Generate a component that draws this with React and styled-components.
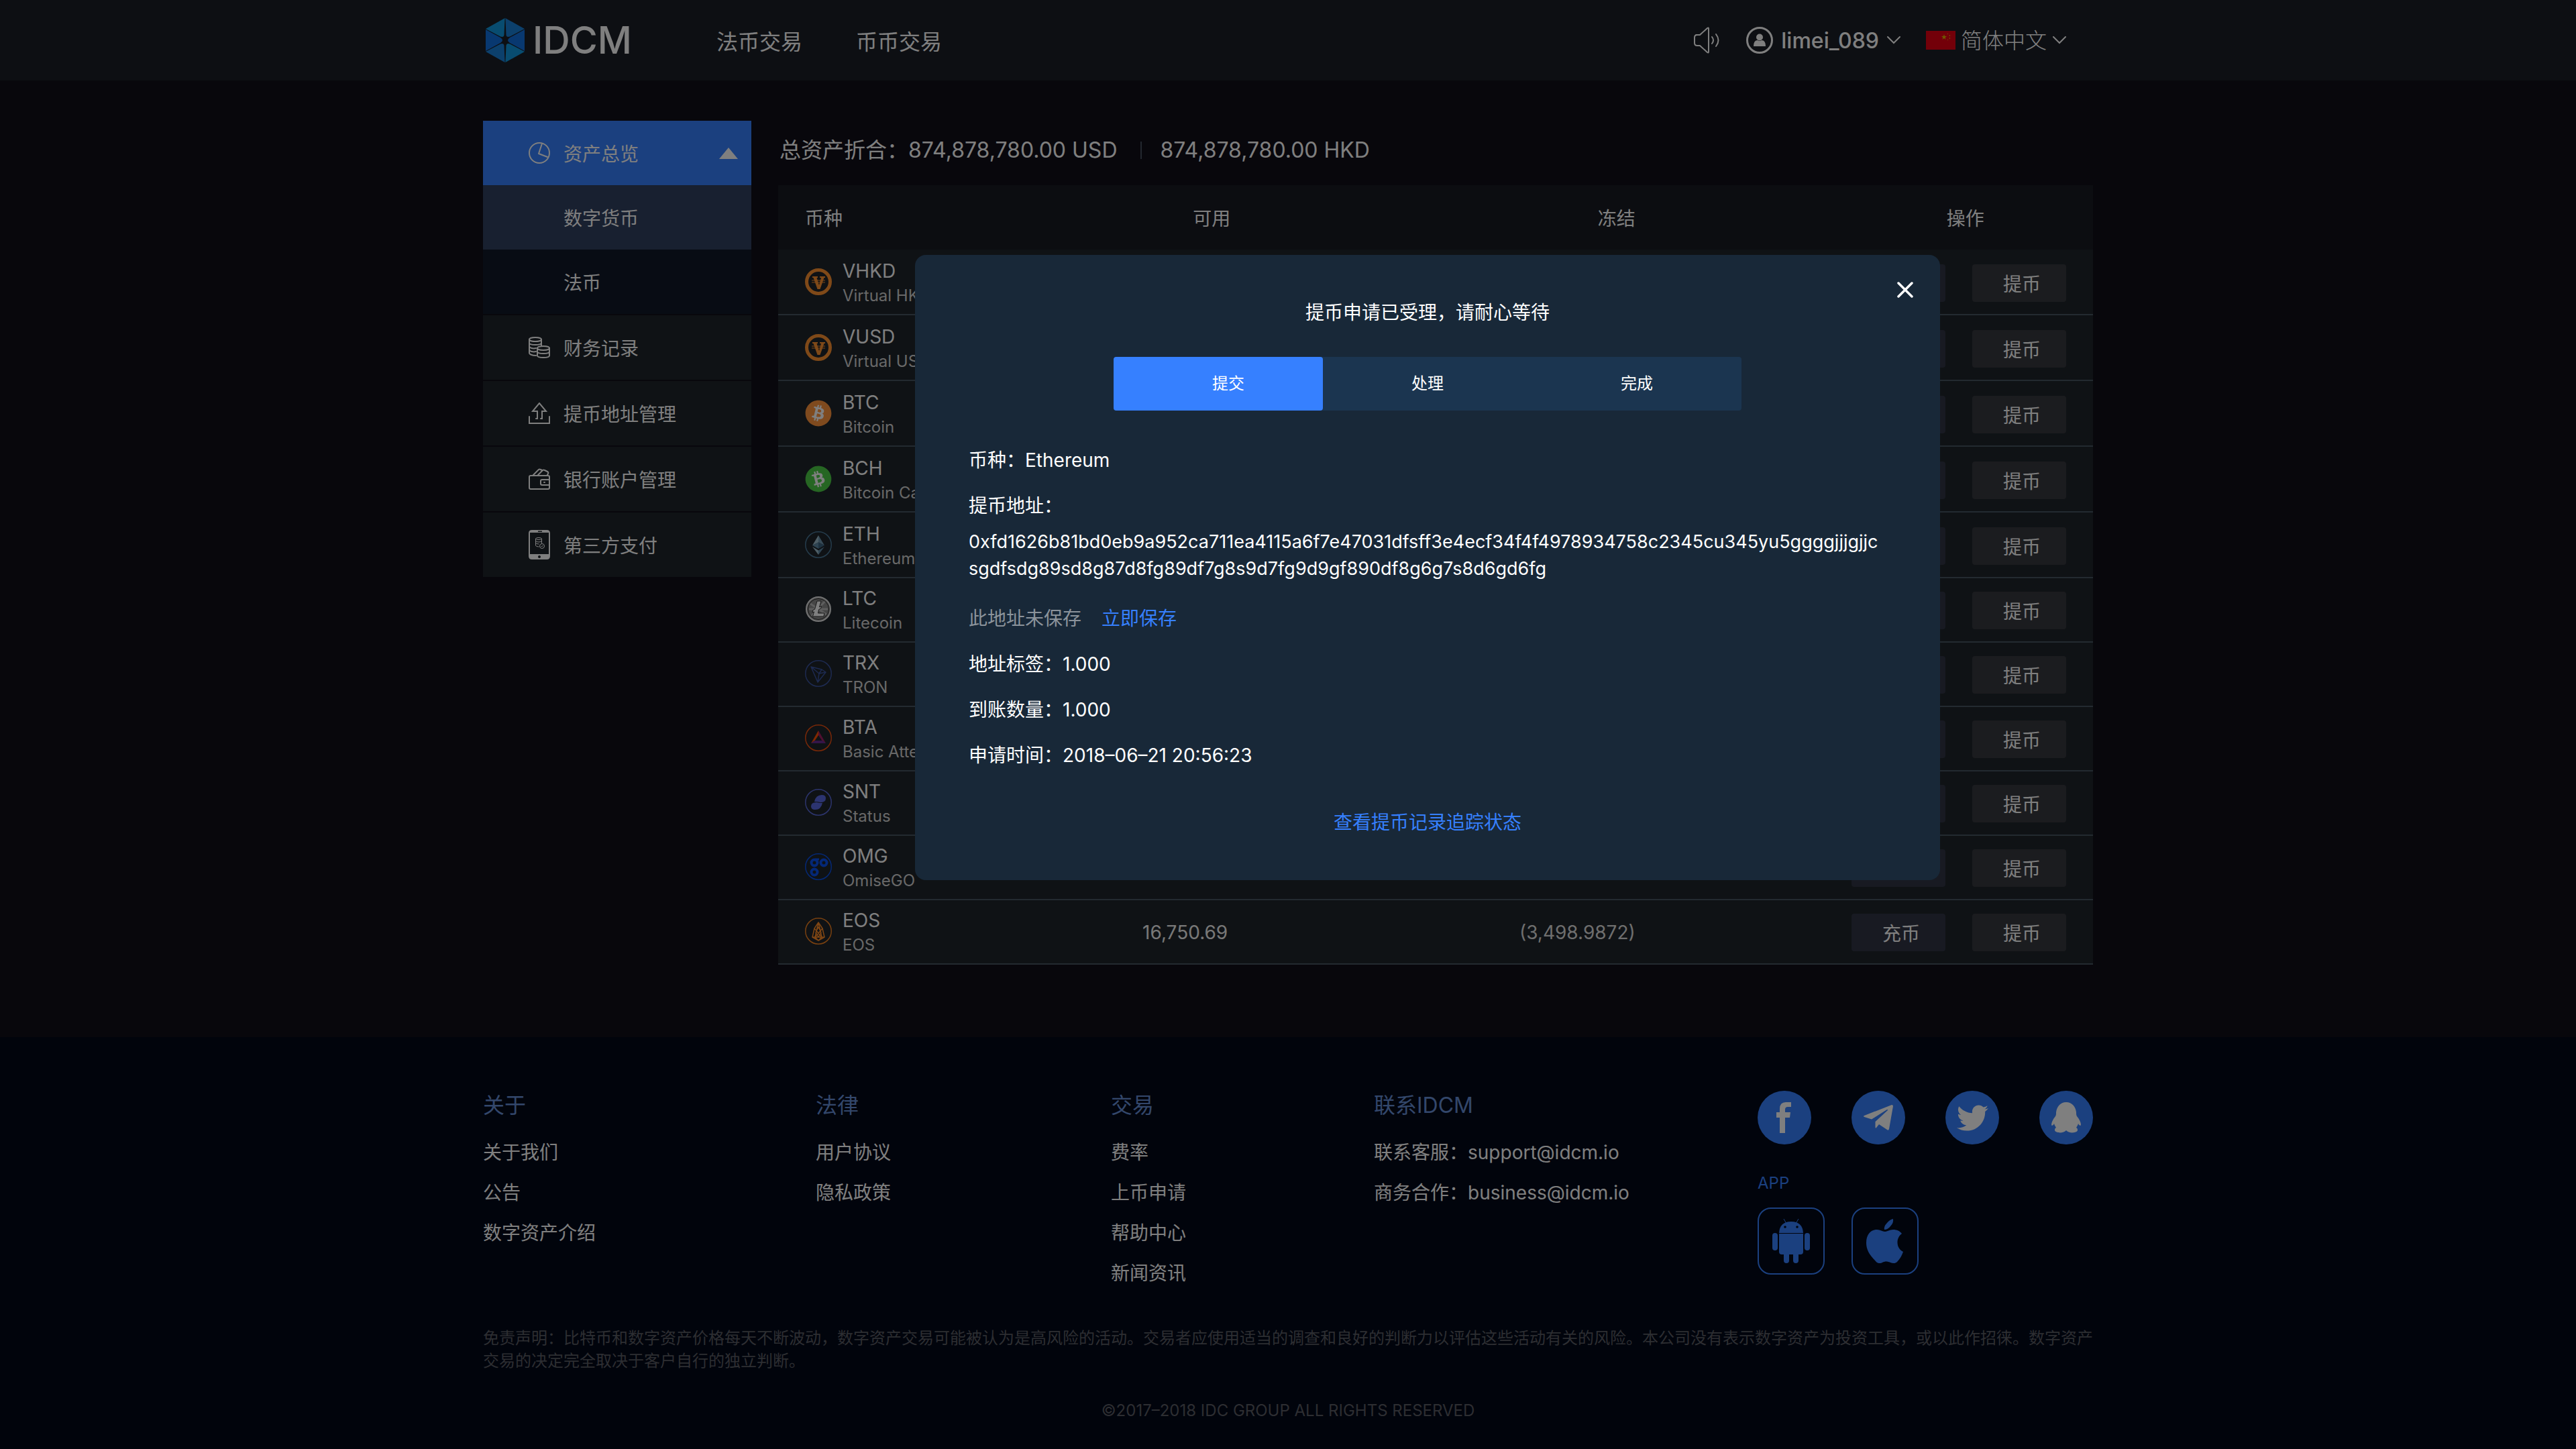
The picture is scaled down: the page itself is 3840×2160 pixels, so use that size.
import React from "react";
import styled, { createGlobalStyle } from "styled-components";
import { FaTwitter, FaBitcoin } from "react-icons/fa";

const GlobalStyle = createGlobalStyle`
  * { box-sizing: border-box; }
  body {
    margin: 0;
    background: #100e18;
    color: #fff;
    font-family: Inter, "Noto Sans CJK SC", sans-serif;
    font-size: 28px;
  }
  button, select { font: inherit; color: inherit; background: none; border: 0; padding: 0; margin: 0; cursor: pointer; }
  a { color: inherit; text-decoration: none; }
  h1, h2, p, ul, dl, dd, ol { margin: 0; padding: 0; font-weight: 400; list-style: none; }
  svg { display: block; flex: none; }
`;

/* ---------- layout ---------- */

const Page = styled.div`
  position: relative;
  min-height: 100vh;
`;

const Container = styled.div`
  max-width: 2400px;
  margin: 0 auto;
`;

const TopBar = styled.header`
  background: #1a1e26;
`;

const TopBarInner = styled(Container)`
  display: flex;
  align-items: center;
  height: 120px;
  padding: 0 40px 0 4px;
`;

const Brand = styled.a`
  display: flex;
  align-items: center;
  gap: 12px;
  width: 344px;
  font-size: 56px;
  font-weight: 500;
  line-height: 60px;
`;

const MainNav = styled.nav`
  display: flex;
  gap: 80px;
  font-size: 32px;
`;

const Account = styled.div`
  display: flex;
  align-items: center;
  gap: 38px;
  margin-left: auto;
  font-size: 32px;
`;

const IconButton = styled.button`
  display: flex;
`;

const UserButton = styled.button`
  display: flex;
  align-items: center;
  gap: 12px;
  font-weight: 500;
`;

const LanguageField = styled.label`
  display: flex;
  align-items: center;
  gap: 8px;
`;

const LanguageSelect = styled.select`
  appearance: none;
  font-weight: 300;
  option { color: #000; }
`;

const Body = styled(Container)`
  display: flex;
  align-items: flex-start;
  gap: 40px;
  padding: 60px 0 108px;
`;

/* ---------- sidebar ---------- */

const Sidebar = styled.nav`
  display: flex;
  flex-direction: column;
  gap: 2px;
  width: 400px;
  flex: none;
`;

const Group = styled.div`
  display: flex;
  flex-direction: column;
`;

const tones = { parent: "#3680ff", current: "#304060", child: "#101828", item: "#1e242a" };

const SideItem = styled.a`
  display: flex;
  align-items: center;
  gap: 20px;
  height: 96px;
  padding: 0 20px 0 ${(p) => (p.$indent ? 120 : 68)}px;
  background: ${(p) => tones[p.$tone]};
`;

const Caret = styled.span`
  margin-left: auto;
  border: 14px solid transparent;
  border-top: 0;
  border-bottom: 17px solid #fff;
`;

/* ---------- assets ---------- */

const Content = styled.main`
  flex: 1;
  min-width: 0;
`;

const Summary = styled.div`
  display: flex;
  align-items: center;
  padding: 2px 0 10px 2px;
  font-size: 32px;
  line-height: 84px;
`;

const Divider = styled.span`
  width: 2px;
  height: 26px;
  margin: 0 28px 0 34px;
  background: #465060;
`;

const AssetTable = styled.table`
  width: 100%;
  table-layout: fixed;
  border-collapse: separate;
  border-spacing: 0;
`;

const Col = styled.col`
  width: ${(p) => p.$w}%;
`;

const aligns = { left: "0 0 0 40px", first: "0", second: "0 302px 0 0", center: "0" };

const HeadCell = styled.th`
  height: 96px;
  padding: ${(p) => aligns[p.$kind]};
  background: #181a22;
  font-weight: 400;
  text-align: ${(p) => (p.$kind === "left" ? "left" : p.$kind === "center" ? "center" : "right")};
`;

const Cell = styled.td`
  height: ${(p) => (p.$tall ? 98 : 96)}px;
  padding: ${(p) => (p.$tall ? 4 : 2)}px 0 0;
  border-bottom: 2px solid #465460;
  background: #1e242a;
`;

const AmountCell = styled(Cell)`
  padding-right: ${(p) => (p.$muted ? 302 : 4)}px;
  text-align: right;
  color: ${(p) => (p.$muted ? "#dcdcdc" : "#f0f0f0")};
`;

const Coin = styled.div`
  display: flex;
  align-items: center;
  gap: 16px;
  padding-left: 40px;
  > svg { margin-bottom: 4px; }
`;

const CoinName = styled.div`
  line-height: 38px;
`;

const CoinNote = styled.div`
  font-size: 24px;
  line-height: 36px;
  color: #d0d0d0;
`;

const Actions = styled.div`
  display: flex;
  justify-content: flex-end;
  gap: 40px;
  padding-right: 40px;
`;

const ActionButton = styled.button`
  width: 140px;
  height: 56px;
  padding-left: 8px;
  border-radius: 4px;
  background: ${(p) => (p.$cool ? "#303444" : "#36383f")};
`;

/* ---------- footer ---------- */

const Footer = styled.footer`
  padding: 80px 0 40px;
  background: #020818;
`;

const FooterGrid = styled.div`
  display: grid;
  grid-template-columns: 496fr 440fr 392fr 572fr 500fr;
`;

const FooterHeading = styled.h2`
  margin-bottom: 18px;
  font-size: 32px;
  line-height: 44px;
  color: #668ed6;
`;

const FooterList = styled.ul`
  line-height: 60px;
`;

const Socials = styled.div`
  display: flex;
  justify-content: space-between;
`;

const SocialLink = styled.a`
  display: grid;
  place-items: center;
  width: 80px;
  height: 80px;
  border-radius: 50%;
  background: #3680ff;
`;

const AppLabel = styled.p`
  margin: 40px 0 18px;
  font-size: 24px;
  line-height: 36px;
  color: #3680ff;
`;

const Apps = styled.div`
  display: flex;
  gap: 40px;
`;

const AppLink = styled.a`
  display: grid;
  place-items: center;
  width: 100px;
  height: 100px;
  border: 2px solid #3680ff;
  border-radius: 20px;
  color: #3680ff;
`;

const Legal = styled.p`
  margin-top: ${(p) => p.$top}px;
  font-size: 24px;
  line-height: 34px;
  color: #5a5c64;
  text-align: ${(p) => (p.$center ? "center" : "left")};
`;

/* ---------- dialog ---------- */

const Scrim = styled.div`
  position: absolute;
  inset: 0;
  background: rgba(0, 0, 0, 0.5);
`;

const Dialog = styled.section`
  position: absolute;
  top: 380px;
  left: calc(50% - 556px);
  width: 1528px;
  padding: 66px 80px;
  border-radius: 16px;
  background: #182838;
  line-height: 40px;
`;

const CloseButton = styled.button`
  position: absolute;
  top: 40px;
  right: 40px;
`;

const DialogTitle = styled.h1`
  font-size: 28px;
  text-align: center;
`;

const Steps = styled.ol`
  display: grid;
  grid-template-columns: repeat(3, minmax(0, 1fr));
  width: 936px;
  margin: 46px auto 54px;
  border-radius: 4px;
  background: #1b3550;
  font-size: 24px;
`;

const Step = styled.li`
  padding-left: ${(p) => (p.$active ? 30 : 0)}px;
  border-radius: 4px;
  background: ${(p) => (p.$active ? "#3680ff" : "transparent")};
  line-height: 80px;
  text-align: center;
`;

const Fields = styled.dl`
  display: flex;
  flex-direction: column;
  gap: 28px;
`;

const Field = styled.div`
  display: flex;
  flex-wrap: wrap;
`;

const Address = styled.dd`
  width: 100%;
  margin-top: 14px;
  font-size: 27px;
  white-space: pre-line;
`;

const SaveRow = styled.div`
  display: flex;
  gap: 30px;
  padding-top: 6px;
  color: #8b939b;
`;

const LinkButton = styled.button`
  color: #3680ff;
`;

const TrackRow = styled.p`
  margin-top: 60px;
  text-align: center;
  color: #3680ff;
`;

/* ---------- icons ---------- */

const Logo = () => (
  <svg width="58" height="66" viewBox="0 0 58 66">
    <path d="M28.600 0 0 16 22 27.500Q27 29 27.500 25z" fill="#1098e0" />
    <path d="M29.400 0 58 16 36 27.500Q31 29 30.500 25z" fill="#1880d8" />
    <path d="M0 17V49L22 37Q25 35 25 33T22 29z" fill="#1070e0" />
    <path d="M58 17V49L36 37Q33 35 33 33T36 29z" fill="#1070e0" />
    <path d="M28.600 66 0 50 22 38.500Q27 37 27.500 41z" fill="#1880d8" />
    <path d="M29.400 66 58 50 36 38.500Q31 37 30.500 41z" fill="#1098e0" />
  </svg>
);

const Speaker = () => (
  <svg width="40" height="40" viewBox="0 0 40 40" fill="none" stroke="#fff" strokeWidth="2" strokeLinecap="round" strokeLinejoin="round">
    <path d="M3 12h6L20 2q2-1.500 2 1v34q0 2.500-2 1L9 28H5q-4 0-4-4V16q0-4 4-4z" />
    <path d="M27 15q4 5 0 10M33 11q7 9 0 18" />
  </svg>
);

const Avatar = () => (
  <svg width="40" height="40" viewBox="0 0 40 40">
    <circle cx="20" cy="20" r="18.500" fill="none" stroke="#fff" strokeWidth="3" />
    <circle cx="20" cy="15.500" r="5" fill="#fff" />
    <path d="M11 29q0-9 6-9 3 2 6 0 6 0 6 9z" fill="#fff" />
  </svg>
);

const Chevron = () => (
  <svg width="20" height="12" viewBox="0 0 20 12" fill="none" stroke="#fff" strokeWidth="2" strokeLinecap="round">
    <path d="M1 1l9 9 9-9" />
  </svg>
);

const Flag = () => (
  <svg width="44" height="28" viewBox="0 0 44 28">
    <path d="M0 0h44v28H0z" fill="#e60012" />
    <path d="M27 5l1 3h3l-2.400 2 1 3-2.600-2-2.600 2 1-3-2.400-2h3zM32 4h1v1h-1zM35 6h1v2h-1zM35 10h1v2h-1zM32 13h1v1h-1z" fill="#e0b000" />
  </svg>
);

const Close = () => (
  <svg width="24" height="24" viewBox="0 0 24 24" stroke="#fff" strokeWidth="3.500" strokeLinecap="round">
    <path d="M2 2l20 20M22 2L2 22" />
  </svg>
);

const line = { fill: "none", stroke: "#fff", strokeWidth: 2, strokeLinejoin: "round", strokeLinecap: "round" };

const PieIcon = () => (
  <svg width="32" height="32" viewBox="0 0 32 32" {...line}>
    <circle cx="16" cy="16" r="15" />
    <path d="M20 2l-5 15 13 5" />
  </svg>
);

const CoinsIcon = () => (
  <svg width="32" height="32" viewBox="0 0 32 32" {...line}>
    <ellipse cx="10" cy="4" rx="9" ry="3" />
    <path d="M1 4v20c0 2 4 4 10 4M19 4v9M1 9c0 4 18 4 18 0M1 14c0 3 6 4 10 3M1 19c0 3 6 4 10 3" />
    <ellipse cx="22" cy="17" rx="9" ry="3" />
    <path d="M13 17v11c0 4 18 4 18 0V17M13 22c0 4 18 4 18 0" />
  </svg>
);

const UploadIcon = () => (
  <svg width="32" height="32" viewBox="0 0 32 32" {...line} strokeLinejoin="miter">
    <path d="M1 21v10h30V21M11 24h2V13H6L16 1l10 12h-6v11h-2" />
  </svg>
);

const WalletIcon = () => (
  <svg width="32" height="32" viewBox="0 0 32 32" {...line}>
    <path d="M3 11h26q2 0 2 2v16q0 2-2 2H3q-2 0-2-2V13q0-2 2-2zM31 17H20q-2 0-2 2v4q0 2 2 2h11M23 21h1M7 10l8-8q1-1 3 0l2 1M14 10l7-7q1-1 3 0l4 2q2 1 1 3l-1 2" />
  </svg>
);

const PhoneIcon = () => (
  <svg width="32" height="44" viewBox="0 0 32 44">
    <path fillRule="evenodd" fill="#fff" d="M5 0h22q5 0 5 5v34q0 5-5 5H5q-5 0-5-5V5q0-5 5-5zM2 4v32h28V4zM14 1.500v1.500h6V1.500zM16 38a2 2 0 1 0 .01 0z" />
    <g fill="none" stroke="#fff" strokeWidth="1">
      <ellipse cx="15" cy="13" rx="4.500" ry="1.500" />
      <path d="M10.500 13v10q0 2 5 2M19.500 13v7M10.500 16q0 2 4.500 2t4.500-2M10.500 19q0 2 5 2" />
      <circle cx="20" cy="24" r="3.500" />
      <path d="M18.500 24l1 1 2-2" />
    </g>
  </svg>
);

const Disc = ({ children, ring, width = 1.5 }) => (
  <svg width="40" height="40" viewBox="0 0 40 40">
    {ring && <circle cx="20" cy="20" r={20 - width / 2} fill="none" stroke={ring} strokeWidth={width} />}
    {children}
  </svg>
);

const VCoin = () => (
  <Disc ring="#ff9230" width={5}>
    <path d="M11 12h8v2h-1.500l3.500 11 3-11H22v-2h8v2h-1.500L22.500 31h-4L12.500 14H11z" fill="#ff9230" />
    <path d="M10 18h20M10 21h20" stroke="#ff9230" strokeWidth="1" />
  </Disc>
);

const BitBadge = styled.span`
  display: flex;
  flex: none;
  width: 40px;
  height: 40px;
  margin-bottom: 4px;
  border-radius: 50%;
  background: radial-gradient(circle, #fff 60%, transparent 61%);
  color: ${(p) => p.$color};
  svg { transform: rotate(${(p) => p.$turn}deg); }
`;

const Ltc = () => (
  <Disc>
    <circle cx="20" cy="20" r="18" fill="#8c8c8c" stroke="#e4e4e4" strokeWidth="2" />
    <path d="M8 12l24 16M6 20h28M10 30l20-22" stroke="#bcbcbc" strokeWidth="3" />
    <circle cx="20" cy="20" r="15.500" fill="none" stroke="#333" strokeWidth="1" />
    <path d="M18 8h6l-2.500 9 3-1.500-.8 3.500-3 1.500L19.500 26H29l-1.200 5H11.500l2-7-2.500 1 .8-3.500 2.700-1.200z" fill="#fff" stroke="#333" strokeWidth="1" />
  </Disc>
);

const Eth = () => (
  <Disc ring="#4a7898">
    <path d="M20 6l-9 15 9-4.500z" fill="#9cbccc" />
    <path d="M20 6l9 15-9-4.500z" fill="#6c94ac" />
    <path d="M11 21l9-4.500V26z" fill="#5c88a4" />
    <path d="M29 21l-9-4.500V26z" fill="#3c6480" />
    <path d="M11 23l9 5.500V35z" fill="#9cbccc" />
    <path d="M29 23l-9 5.500V35z" fill="#5c88a4" />
  </Disc>
);

const Trx = () => (
  <Disc ring="#3a54a0">
    <path d="M9 10l16 4 6 4-12 15zM9 10l12 10 4-6M21 20l-2 13M21 20l10-2" fill="none" stroke="#3a54a0" strokeWidth="1.500" strokeLinejoin="round" />
  </Disc>
);

const Bta = () => (
  <Disc ring="#f05010">
    <path d="M20 9v7l-6 9-5 3z" fill="#ff5000" />
    <path d="M20 9v7l6 9 5 3z" fill="#9e1f63" />
    <path d="M9 28l5-4h12l5 4z" fill="#662d91" />
  </Disc>
);

const Snt = () => (
  <Disc ring="#5868d8">
    <path d="M14 19q2-10 11-10 6 0 6 5 0 6-8 6-4-1-9-1z" fill="#5868e0" />
    <path d="M26 21q-2 10-11 10-6 0-6-5 0-6 8-6 4 1 9 1z" fill="#5868e0" />
  </Disc>
);

const Omg = () => (
  <Disc ring="#0850e8">
    <g fill="none" stroke="#0850f0" strokeWidth="4">
      <circle cx="14" cy="14" r="4.500" />
      <circle cx="28" cy="14" r="4.500" />
      <circle cx="14" cy="28" r="4.500" />
    </g>
    <path d="M15 7.500h6v3h-4z" fill="#0850f0" />
  </Disc>
);

const Eos = () => (
  <Disc ring="#f08020">
    <path d="M20 7l6 9 3 13-9 5-9-5 3-13zM20 7l-5 22 5 5 5-5zM14 16l11 13M26 16L15 29M11 29h18M20 14l-4 8 4 7 4-7z" fill="none" stroke="#ff8c28" strokeWidth="1.500" strokeLinejoin="round" />
  </Disc>
);

const Facebook = () => (
  <svg width="24" height="46" viewBox="0 0 24 46">
    <path d="M22 0v7h-5q-4 0-4 4v4h8l-1 8h-7v23H5V23H0v-8h5v-5Q5 0 14 0z" fill="#fff" />
  </svg>
);

const Telegram = () => (
  <svg width="44" height="38" viewBox="0 0 44 38">
    <path d="M42 0q2 0 2 2l-6 34q-1 3-3 1l-12-8-4 5q-1.500 1.500-1.500-1v-8L36 8q1-1-1-1L12 21.500 1 18q-2-1 0-2z" fill="#fff" />
  </svg>
);

const Penguin = () => (
  <svg width="44" height="46" viewBox="0 0 44 46">
    <path d="M22 0c9 0 14 7 15 15 0 3 0 4 1 6 4 5 6 9 6 13-1 2-3 0-4-2-1 3-2 4-3 6 2 1 2 2 2 4-1 4-13 5-17 0-4 5-16 4-17 0 0-2 0-3 2-4-1-2-2-3-3-6-1 2-3 4-4 2 0-4 2-8 6-13 1-2 1-3 1-6C8 7 13 0 22 0z" fill="#fff" />
  </svg>
);

const Android = () => (
  <svg width="56" height="66" viewBox="0 0 56 66" fill="currentColor">
    <path d="M10 21Q11 4 28 4t18 17z" />
    <path d="M17 0l4 7M39 0l-4 7" stroke="currentColor" strokeWidth="1" />
    <circle cx="19" cy="12" r="1.800" fill="#020818" />
    <circle cx="37" cy="12" r="1.800" fill="#020818" />
    <path d="M10 22h36v27q0 4-4 4h-3v9a4 4 0 0 1-8 0v-9h-6v9a4 4 0 0 1-8 0v-9h-3q-4 0-4-4z" />
    <rect x="0" y="21" width="8" height="26" rx="4" />
    <rect x="48" y="21" width="8" height="26" rx="4" />
  </svg>
);

const Apple = () => (
  <svg width="56" height="66" viewBox="0 0 56 66" fill="currentColor">
    <path d="M40 0q1 6-4 11-4 5-9 5-1-5 4-10 4-5 9-6z" />
    <path d="M53 22c-9 6-9 22 2 27-2 6-5 11-9 15-3 3-7 2-10 1-5-2-8-2-12 0-4 2-8 1-10-2C4 53 0 45 0 36c0-13 7-20 16-20 5 0 8 3 12 3 3 0 7-3 12-3 6 0 10 2 13 6z" />
  </svg>
);

/* ---------- data ---------- */

const coins = [
  { code: "VHKD", name: "Virtual HKD", icon: <VCoin />, tall: true },
  { code: "VUSD", name: "Virtual USD", icon: <VCoin />, tall: true },
  { code: "BTC", name: "Bitcoin", icon: <BitBadge $color="#ff943c" $turn={0}><FaBitcoin size={40} /></BitBadge>, tall: true },
  { code: "BCH", name: "Bitcoin Cash", icon: <BitBadge $color="#4ccc47" $turn={-28}><FaBitcoin size={40} /></BitBadge>, tall: true },
  { code: "ETH", name: "Ethereum", icon: <Eth />, tall: true },
  { code: "LTC", name: "Litecoin", icon: <Ltc /> },
  { code: "TRX", name: "TRON", icon: <Trx /> },
  { code: "BTA", name: "Basic Attention", icon: <Bta /> },
  { code: "SNT", name: "Status", icon: <Snt /> },
  { code: "OMG", name: "OmiseGO", icon: <Omg /> },
  { code: "EOS", name: "EOS", icon: <Eos />, free: "16,750.69", frozen: "(3,498.9872)" },
];

const footerColumns = [
  { title: "关于", links: ["关于我们", "公告", "数字资产介绍"] },
  { title: "法律", links: ["用户协议", "隐私政策"] },
  { title: "交易", links: ["费率", "上币申请", "帮助中心", "新闻资讯"] },
  { title: "联系IDCM", links: ["联系客服：support@idcm.io", "商务合作：business@idcm.io"] },
];

const address =
  "0xfd1626b81bd0eb9a952ca711ea4115a6f7e47031dfsff3e4ecf34f4f4978934758c2345cu345yu5ggggjjjgjjc\nsgdfsdg89sd8g87d8fg89df7g8s9d7fg9d9gf890df8g6g7s8d6gd6fg";

export default function App() {
  return (
    <Page>
      <GlobalStyle />
      <TopBar>
        <TopBarInner>
          <Brand href="#"><Logo />IDCM</Brand>
          <MainNav>
            <a href="#">法币交易</a>
            <a href="#">币币交易</a>
          </MainNav>
          <Account>
            <IconButton aria-label="公告"><Speaker /></IconButton>
            <UserButton><Avatar />limei_089<Chevron /></UserButton>
            <LanguageField>
              <Flag />
              <LanguageSelect aria-label="语言"><option>简体中文</option></LanguageSelect>
              <Chevron />
            </LanguageField>
          </Account>
        </TopBarInner>
      </TopBar>

      <Body>
        <Sidebar>
          <Group>
            <SideItem href="#" $tone="parent"><PieIcon />资产总览<Caret /></SideItem>
            <SideItem href="#" $tone="current" $indent>数字货币</SideItem>
            <SideItem href="#" $tone="child" $indent>法币</SideItem>
          </Group>
          <SideItem href="#" $tone="item"><CoinsIcon />财务记录</SideItem>
          <SideItem href="#" $tone="item"><UploadIcon />提币地址管理</SideItem>
          <SideItem href="#" $tone="item"><WalletIcon />银行账户管理</SideItem>
          <SideItem href="#" $tone="item"><PhoneIcon />第三方支付</SideItem>
        </Sidebar>

        <Content>
          <Summary>
            <span>总资产折合：874,878,780.00 USD</span>
            <Divider />
            <span>874,878,780.00 HKD</span>
          </Summary>
          <AssetTable>
            <colgroup>
              <Col $w={20} />
              <Col $w={14.4} />
              <Col $w={46.2} />
              <Col $w={19.4} />
            </colgroup>
            <thead>
              <tr>
                <HeadCell $kind="left">币种</HeadCell>
                <HeadCell $kind="first">可用</HeadCell>
                <HeadCell $kind="second">冻结</HeadCell>
                <HeadCell $kind="center">操作</HeadCell>
              </tr>
            </thead>
            <tbody>
              {coins.map((c) => (
                <tr key={c.code}>
                  <Cell $tall={c.tall}>
                    <Coin>
                      {c.icon}
                      <div>
                        <CoinName>{c.code}</CoinName>
                        <CoinNote>{c.name}</CoinNote>
                      </div>
                    </Coin>
                  </Cell>
                  <AmountCell $tall={c.tall}>{c.free}</AmountCell>
                  <AmountCell $tall={c.tall} $muted>{c.frozen}</AmountCell>
                  <Cell $tall={c.tall}>
                    <Actions>
                      <ActionButton $cool>充币</ActionButton>
                      <ActionButton>提币</ActionButton>
                    </Actions>
                  </Cell>
                </tr>
              ))}
            </tbody>
          </AssetTable>
        </Content>
      </Body>

      <Footer>
        <Container>
          <FooterGrid>
            {footerColumns.map((col) => (
              <div key={col.title}>
                <FooterHeading>{col.title}</FooterHeading>
                <FooterList>
                  {col.links.map((l) => (
                    <li key={l}><a href="#">{l}</a></li>
                  ))}
                </FooterList>
              </div>
            ))}
            <div>
              <Socials>
                <SocialLink href="#" aria-label="Facebook"><Facebook /></SocialLink>
                <SocialLink href="#" aria-label="Telegram"><Telegram /></SocialLink>
                <SocialLink href="#" aria-label="Twitter"><FaTwitter size={47} /></SocialLink>
                <SocialLink href="#" aria-label="QQ"><Penguin /></SocialLink>
              </Socials>
              <AppLabel>APP</AppLabel>
              <Apps>
                <AppLink href="#" aria-label="Android"><Android /></AppLink>
                <AppLink href="#" aria-label="iOS"><Apple /></AppLink>
              </Apps>
            </div>
          </FooterGrid>
          <Legal $top={50}>
            免责声明：比特币和数字资产价格每天不断波动，数字资产交易可能被认为是高风险的活动。交易者应使用适当的调查和良好的判断力以评估这些活动有关的风险。本公司没有表示数字资产为投资工具，或以此作招徕。数字资产交易的决定完全取决于客户自行的独立判断。
          </Legal>
          <Legal $top={40} $center>©2017–2018 IDC GROUP ALL RIGHTS RESERVED</Legal>
        </Container>
      </Footer>

      <Scrim />

      <Dialog role="dialog" aria-modal="true" aria-labelledby="dialog-title">
        <CloseButton aria-label="关闭"><Close /></CloseButton>
        <DialogTitle id="dialog-title">提币申请已受理，请耐心等待</DialogTitle>
        <Steps>
          <Step $active>提交</Step>
          <Step>处理</Step>
          <Step>完成</Step>
        </Steps>
        <Fields>
          <Field><dt>币种：</dt><dd>Ethereum</dd></Field>
          <Field><dt>提币地址：</dt><Address>{address}</Address></Field>
          <SaveRow><dt>此地址未保存</dt><dd><LinkButton>立即保存</LinkButton></dd></SaveRow>
          <Field><dt>地址标签：</dt><dd>1.000</dd></Field>
          <Field><dt>到账数量：</dt><dd>1.000</dd></Field>
          <Field><dt>申请时间：</dt><dd>2018–06–21 20:56:23</dd></Field>
        </Fields>
        <TrackRow><a href="#">查看提币记录追踪状态</a></TrackRow>
      </Dialog>
    </Page>
  );
}
